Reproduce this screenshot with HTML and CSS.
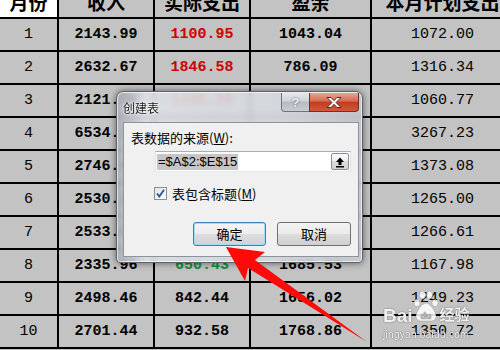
FILE: index.html
```html
<!DOCTYPE html>
<html lang="zh-CN">
<head>
    <meta charset="UTF-8">
    <title>创建表</title>
    <link rel="stylesheet" href="styles.css">
</head>
<body>
    <div class="sheet">
        <table class="grid">
            <colgroup>
                <col class="w-month"><col class="w-mid"><col class="w-mid"><col class="w-wide"><col class="w-last">
            </colgroup>
            <thead>
                <tr>
                    <th class="corner">月份</th><th>收入</th><th>实际支出</th><th>盈余</th><th>本月计划支出</th>
                </tr>
            </thead>
            <tbody>
                <tr><td>1</td><td class="b">2143.99</td><td class="b red">1100.95</td><td class="b">1043.04</td><td>1072.00</td></tr>
                <tr><td>2</td><td class="b">2632.67</td><td class="b red">1846.58</td><td class="b">786.09</td><td>1316.34</td></tr>
                <tr><td>3</td><td class="b">2121.36</td><td class="b red">1156.20</td><td class="b">965.16</td><td>1060.77</td></tr>
                <tr><td>4</td><td class="b">6534.12</td><td class="b red">3410.55</td><td class="b">3123.57</td><td>3267.23</td></tr>
                <tr><td>5</td><td class="b">2746.80</td><td class="b">1298.37</td><td class="b">1448.43</td><td>1373.08</td></tr>
                <tr><td>6</td><td class="b">2530.25</td><td class="b">1187.64</td><td class="b">1342.61</td><td>1265.00</td></tr>
                <tr><td>7</td><td class="b">2533.09</td><td class="b red">1302.18</td><td class="b">1230.91</td><td>1266.61</td></tr>
                <tr><td>8</td><td class="b">2335.96</td><td class="b green">650.43</td><td class="b">1685.53</td><td>1167.98</td></tr>
                <tr><td>9</td><td class="b">2498.46</td><td class="b">842.44</td><td class="b">1656.02</td><td>1249.23</td></tr>
                <tr><td>10</td><td class="b">2701.44</td><td class="b">932.58</td><td class="b">1768.86</td><td>1350.72</td></tr>
            </tbody>
        </table>
    </div>

    <div class="dialog">
        <div class="titlebar">
            <span class="title">创建表</span>
            <div class="caption-buttons">
                <span class="cap-btn help">?</span>
                <span class="cap-btn close">
                    <svg width="20" height="13" viewBox="0 0 20 13">
                        <path d="M3 1.5h4l3 3.2 3-3.2h4l-5 5 5 5h-4l-3-3.2-3 3.2h-4l5-5z" fill="#fff" stroke="#5a2a20" stroke-width="1"/>
                    </svg>
                </span>
            </div>
        </div>
        <div class="panel">
            <div class="field-label">表数据的来源(<u>W</u>):</div>
            <div class="range-box">
                <span class="range-text">=$A$2:$E$15</span>
                <span class="collapse-btn">
                    <svg width="12" height="12" viewBox="0 0 12 12">
                        <path d="M6 1.5 2 6h2.5v3h3V6H10z" fill="#000"/>
                        <rect x="2" y="10" width="8" height="1.5" fill="#000"/>
                    </svg>
                </span>
            </div>
            <label class="check-row">
                <span class="checkbox">
                    <svg width="11" height="11" viewBox="0 0 11 11">
                        <path d="M2 5.5 4.3 8.5 9 1.8" fill="none" stroke="#2c4f9e" stroke-width="1.8"/>
                    </svg>
                </span>
                表包含标题(<u>M</u>)
            </label>
            <div class="actions">
                <span class="btn focused">确定</span>
                <span class="btn">取消</span>
            </div>
        </div>
    </div>

    <svg class="pointer" width="500" height="350" viewBox="0 0 500 350">
        <polygon points="226,247 265,252 255,260 367,342 248,268 245,281" fill="#ff0a0a"/>
    </svg>

    <div class="watermark">
        <div class="wm-logo">
            <span class="wm-bai">Bai</span>
            <svg width="26" height="32" viewBox="0 0 26 32">
                <g fill="rgba(255,255,255,0.85)" stroke="rgba(110,110,110,0.5)" stroke-width="0.6">
                    <ellipse cx="4" cy="13" rx="3" ry="3.6"/>
                    <ellipse cx="9.5" cy="5" rx="3" ry="3.8"/>
                    <ellipse cx="16.5" cy="5" rx="3" ry="3.8"/>
                    <ellipse cx="22" cy="13" rx="3" ry="3.6"/>
                    <path d="M13 13c-4 0-10 9-10 13 0 4 3 5 5 5h10c2 0 5-1 5-5 0-4-6-13-10-13z"/>
                </g>
                <text x="13" y="29" text-anchor="middle" font-family="Liberation Sans" font-weight="700" font-size="9" fill="#b8b8b8">du</text>
            </svg>
            <span class="wm-cn">经验</span>
        </div>
        <div class="wm-url">jingyan.baidu.com</div>
    </div>
</body>
</html>
```

FILE: styles.css
```css
body {
    margin: 0;
    width: 500px;
    height: 350px;
    overflow: hidden;
    position: relative;
    background-color: #c3c3c3;
}

.sheet {
    margin: -16px 0 0 -2px;
    height: 366px;
    overflow: hidden;
}

.grid {
    border-collapse: collapse;
    table-layout: fixed;
    width: 515px;
}

.w-month { width: 59px; }
.w-mid { width: 96px; }
.w-wide { width: 121px; }
.w-last { width: 143px; }

.grid th,
.grid td {
    border: 2px solid #000;
    padding: 0;
    text-align: center;
    background-color: #c3c3c3;
    overflow: hidden;
    white-space: nowrap;
}

.grid tr {
    height: 33px;
}

.grid th {
    font-family: "Noto Sans CJK SC", sans-serif;
    font-size: 19px;
    font-weight: 700;
    line-height: 20px;
}

.grid th.corner {
    background-color: #ffffff;
}

.grid td {
    font-family: "Liberation Mono", monospace;
    font-size: 15px;
    color: #000;
}

.grid td.b { font-weight: 700; }
.grid td.red { color: #d00000; }
.grid td.green { color: #10903a; }

/* dialog window */
.dialog {
    position: absolute;
    left: 116px;
    top: 91px;
    width: 247px;
    height: 172px;
    box-sizing: border-box;
    padding: 0 3px 5px 6px;
    border: 1px solid #5f646b;
    border-radius: 7px 7px 4px 4px;
    background: linear-gradient(to right, rgba(170, 176, 184, 0.85), rgba(222, 226, 231, 0.85) 12%, rgba(214, 218, 223, 0.85) 70%, rgba(196, 201, 207, 0.85));
    backdrop-filter: blur(3px);
    box-shadow: 0 0 7px rgba(0, 0, 0, 0.55), inset 0 0 0 1px rgba(255, 255, 255, 0.6);
    display: flex;
    flex-direction: column;
}

.titlebar {
    height: 30px;
    display: flex;
    align-items: flex-start;
}

.title {
    margin-top: 9px;
    font-family: "Noto Sans CJK SC", sans-serif;
    font-size: 12px;
    line-height: 14px;
    color: #1b1b1b;
    text-shadow: 0 0 4px #fff, 0 0 2px #fff;
}

.caption-buttons {
    margin-left: auto;
    margin-top: 1px;
    display: flex;
}

.cap-btn {
    height: 19px;
    box-sizing: border-box;
    display: flex;
    align-items: center;
    justify-content: center;
}

.help {
    width: 28px;
    border: 1px solid #6e747c;
    border-right: none;
    border-top: none;
    border-radius: 0 0 0 4px;
    background: linear-gradient(#e3e6ea, #cfd3d8 45%, #b6bbc2 50%, #c9cdd2);
    font-family: "Liberation Sans", sans-serif;
    font-weight: 700;
    font-size: 13px;
    color: #eef0f2;
    text-shadow: 0 0 2px #555;
}

.close {
    width: 50px;
    border: 1px solid #6b3328;
    border-top: none;
    border-radius: 0 0 4px 0;
    background: linear-gradient(#e6a594, #d66a52 45%, #c23b20 52%, #d2583b);
}

.panel {
    flex: 1;
    background-color: #f0f0f0;
    border: 1px solid #8d939a;
    padding: 7px 7px 0 7px;
    font-family: "Noto Sans CJK SC", sans-serif;
    font-size: 13px;
    color: #000;
}

.field-label {
    line-height: 16px;
}

.range-box {
    margin: 5px 0 0 24px;
    height: 21px;
    box-sizing: border-box;
    border: 1px solid #abadb3;
    border-color: #abadb3 #dbdfe6 #e3e9ef #e2e3ea;
    background-color: #fff;
    display: flex;
    align-items: center;
    padding: 0 1px;
}

.range-text {
    font-family: "Liberation Sans", sans-serif;
    font-size: 13px;
    line-height: 16px;
    padding: 0 1px;
    background-color: #c6c6c6;
}

.collapse-btn {
    margin-left: auto;
    width: 18px;
    height: 17px;
    box-sizing: border-box;
    border: 1px solid #8a8d92;
    border-radius: 2px;
    background: linear-gradient(#fdfdfd, #ececec 50%, #dcdcdc 50%, #d4d4d4);
    display: flex;
    align-items: center;
    justify-content: center;
}

.check-row {
    margin: 15px 0 0 23px;
    display: flex;
    align-items: center;
    line-height: 13px;
    height: 13px;
}

.checkbox {
    width: 13px;
    height: 13px;
    box-sizing: border-box;
    border: 1px solid #8e8f8f;
    background: linear-gradient(135deg, #e0e3e6, #fafbfb);
    margin-right: 5px;
    display: flex;
    align-items: center;
    justify-content: center;
}

.actions {
    margin-top: 22px;
    display: flex;
    justify-content: flex-end;
    gap: 11px;
}

.btn {
    width: 73px;
    height: 24px;
    box-sizing: border-box;
    border: 1px solid #707070;
    border-radius: 3px;
    background: linear-gradient(#f2f2f2, #ebebeb 50%, #dddddd 50%, #cfcfcf);
    display: flex;
    align-items: center;
    justify-content: center;
    line-height: 16px;
}

.btn + .btn {
    width: 74px;
}

.btn.focused {
    border-color: #3c7fb1;
    box-shadow: inset 0 0 0 1px #9fdcf7;
    background: linear-gradient(#f4f4f4, #ececec 50%, #dedede 50%, #d2d2d2);
}

.pointer {
    position: absolute;
    left: 0;
    top: 0;
    pointer-events: none;
}

.watermark {
    position: absolute;
    left: 383px;
    top: 290px;
    color: rgba(255, 255, 255, 0.9);
    text-shadow: 0 0 1px rgba(80, 80, 80, 0.8), 0 0 2px rgba(80, 80, 80, 0.4);
}

.wm-logo {
    display: flex;
    align-items: flex-end;
    height: 32px;
}

.wm-bai {
    font-family: "Liberation Sans", sans-serif;
    font-weight: 700;
    font-size: 19px;
    line-height: 19px;
    margin-bottom: -3px;
}

.wm-cn {
    font-family: "Noto Sans CJK SC", sans-serif;
    font-weight: 700;
    font-size: 15px;
    line-height: 16px;
    margin-left: 1px;
}

.wm-url {
    margin-top: 7px;
    font-family: "Liberation Sans", sans-serif;
    font-size: 10px;
    line-height: 11px;
    letter-spacing: 0.3px;
}
```
